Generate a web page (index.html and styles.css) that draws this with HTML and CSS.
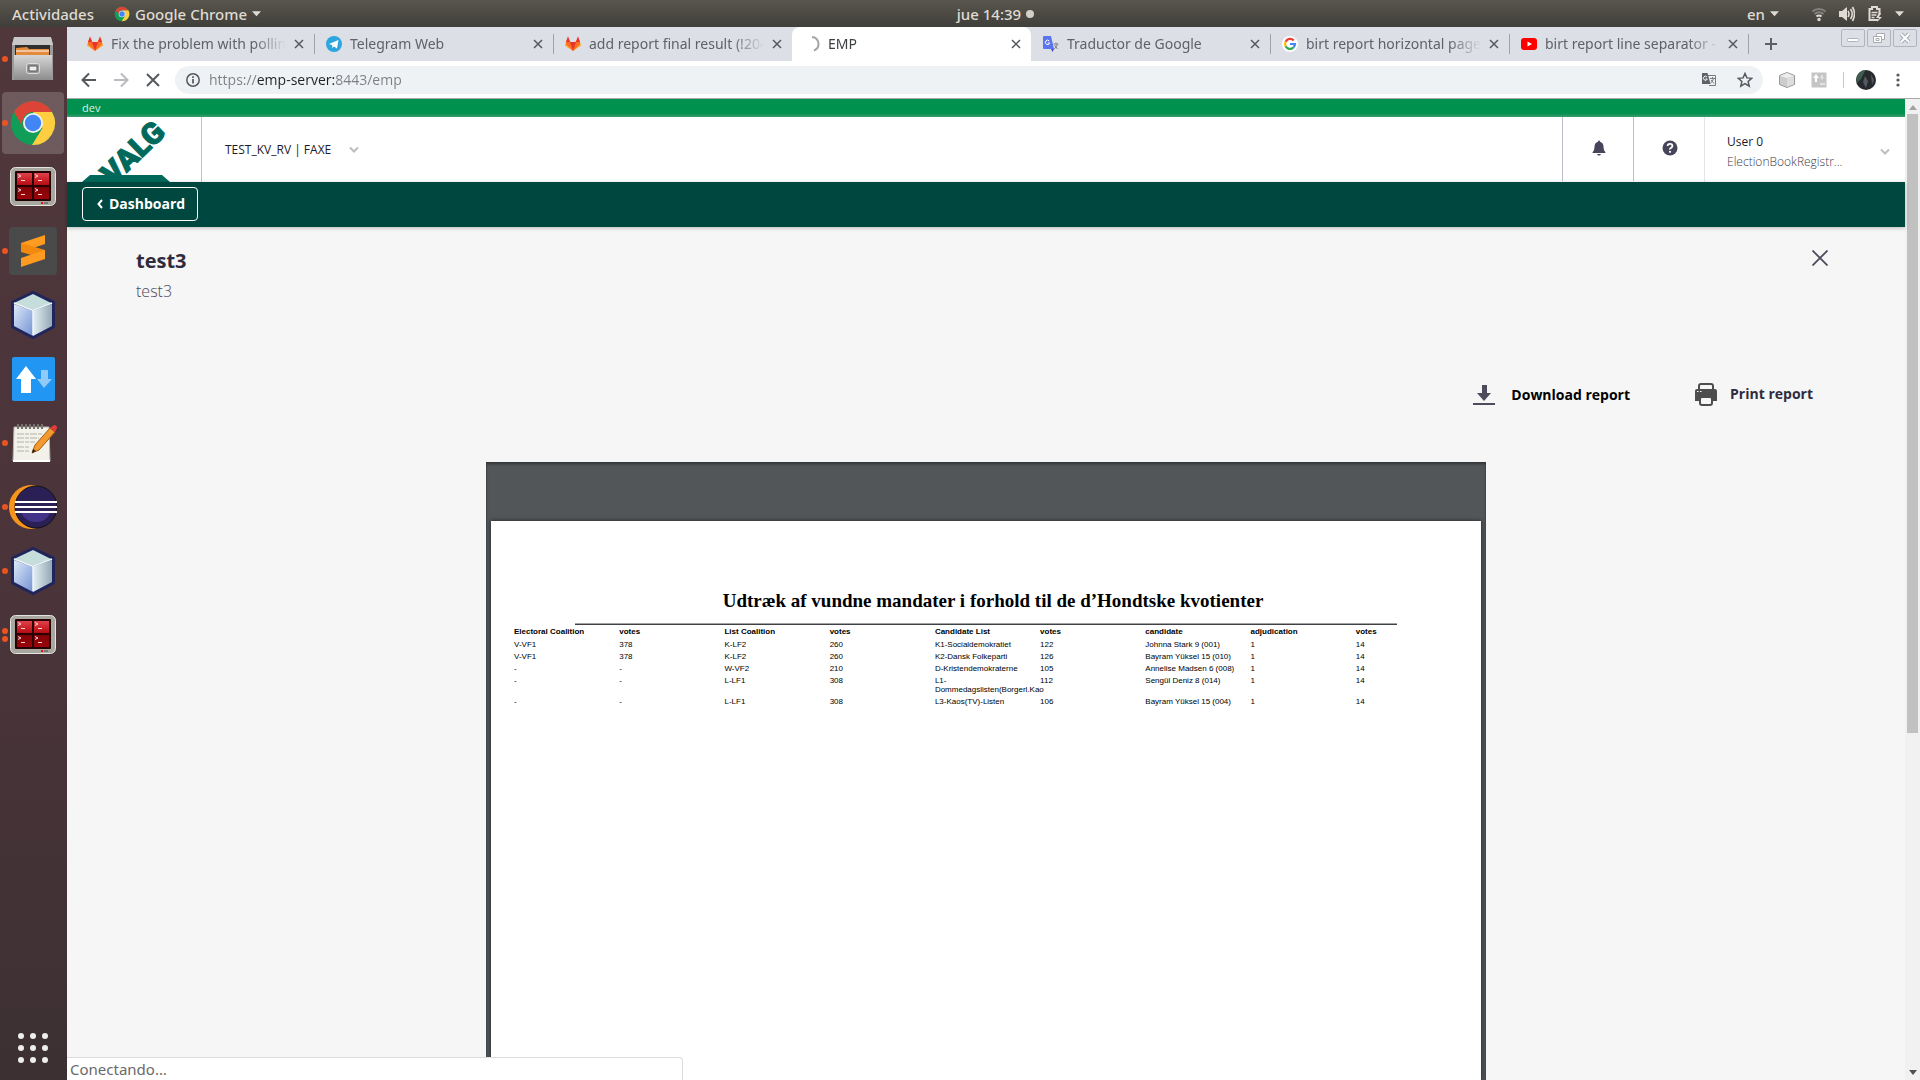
FILE: index.html
```html
<!DOCTYPE html>
<html lang="es">
<head>
<meta charset="utf-8">
<title>EMP</title>
<link rel="stylesheet" href="styles.css">
</head>
<body>
<svg class="defs" aria-hidden="true">
  <defs>
    <linearGradient id="metal" x1="0" y1="0" x2="0" y2="1"><stop offset="0" stop-color="#d6d6d6"/><stop offset="1" stop-color="#8d8d8d"/></linearGradient>
    <linearGradient id="red" x1="0" y1="0" x2="0" y2="1"><stop offset="0" stop-color="#e0414a"/><stop offset=".45" stop-color="#b80c14"/><stop offset=".5" stop-color="#7c0308"/><stop offset="1" stop-color="#9c0309"/></linearGradient>
    <linearGradient id="cubeL" x1="0" y1="0" x2="1" y2="1"><stop offset="0" stop-color="#dfeaf8"/><stop offset="1" stop-color="#7392d4"/></linearGradient>
    <linearGradient id="cubeR" x1="0" y1="0" x2="1" y2="0"><stop offset="0" stop-color="#e6eef3"/><stop offset="1" stop-color="#93a9b6"/></linearGradient>
    <symbol id="chrome" viewBox="0 0 48 48">
      <circle cx="24" cy="24" r="22" fill="#109d58"/>
      <path d="M24 13h19A22 22 0 0 1 23 46l10.500-17z" fill="#ffcd40"/>
      <path d="M5 13A22 22 0 0 1 43 13H24a11 11 0 0 0-9.500 16.500z" fill="#db4437"/>
      <circle cx="24" cy="24" r="10" fill="#f1f1f1"/><circle cx="24" cy="24" r="8.200" fill="#4285f4"/>
    </symbol>
    <symbol id="terminal" viewBox="0 0 48 48">
      <rect x="1.500" y="4.500" width="45" height="38" rx="5" fill="#a8a8a0" stroke="#e4e4df"/>
      <rect x="6" y="8" width="36" height="30" rx="1" fill="#240203"/>
      <path d="M8 10h15v12H8zM25 10h15v12H25zM8 24h15v12H8zM25 24h15v12H25z" fill="url(#red)"/>
      <path d="M9 11.500l3 1.500-3 1.500M12 17.500h4M26 11.500l3 1.500-3 1.500M29 17.500h4M9 25.500l3 1.500-3 1.500M12 31.500h4M26 25.500l3 1.500-3 1.500M29 31.500h4" fill="none" stroke="#fbd5d5"/>
      <path d="M32 40h2" stroke="#e11" stroke-width="2"/><path d="M35 40h4" stroke="#777" stroke-width="2"/>
    </symbol>
    <symbol id="cube" viewBox="0 0 48 48">
      <path d="M24 1L45 11V36L24 47L3 36V11z" fill="#20265c" stroke="#20265c" stroke-width="2" stroke-linejoin="round"/>
      <path d="M24 3L42 12L24 19L5 12z" fill="#c5dedb"/>
      <path d="M5 13L24 20V45L5 35z" fill="url(#cubeL)"/>
      <path d="M43 13L24 20V45L43 35z" fill="url(#cubeR)"/>
      <path d="M5 12L24 19.500L43 12M24 19v25" fill="none" stroke="#eef6fb" stroke-width="1.500"/>
    </symbol>
    <symbol id="gitlab" viewBox="0 0 16 16">
      <path d="M8 15L0 9.500L1 6h14l1 3.500z" fill="#fca326"/>
      <path d="M1 6L3 1l2.500 5L8 15L1 8zM15 6l-2-5l-2.500 5L8 15l7-7z" fill="#fc6d26"/>
      <path d="M5 6h6L8 15zM1 6l2-5.500L5 6zM15 6l-2-5.500L11 6z" fill="#e8352a"/>
    </symbol>
    <symbol id="x" viewBox="0 0 10 10"><path d="M1 1l8 8M9 1l-8 8" stroke="currentColor" stroke-width="1.500" fill="none"/></symbol>
    <symbol id="caret" viewBox="0 0 10 6"><path d="M0 0h10L5 5.500z" fill="currentColor"/></symbol>
    <symbol id="chev" viewBox="0 0 10 8"><path d="M1 1.500l4 4l4-4" fill="none" stroke="#bdbdc1" stroke-width="2"/></symbol>
  </defs>
</svg>

<header class="topbar">
  <div class="topbar-left">
    <button class="top-item">Actividades</button>
    <button class="top-item"><svg width="16" height="16"><use href="#chrome"/></svg><span>Google Chrome</span><svg class="caret" width="9" height="6"><use href="#caret"/></svg></button>
  </div>
  <button class="top-item clock">jue 14:39<span class="notice"></span></button>
  <div class="topbar-right">
    <button class="top-item lang">en<svg class="caret" width="9" height="6"><use href="#caret"/></svg></button>
    <svg width="16" height="16" viewBox="0 0 16 16" fill="none" stroke-width="2"><path d="M1.500 5.500a9.500 9.500 0 0 1 13 0M3.500 8a6.500 6.500 0 0 1 9 0" stroke="#83817b"/><path d="M5.500 10.500a3.500 3.500 0 0 1 5 0" stroke="#dfdbd2"/><circle cx="8" cy="13.500" r="1.700" fill="#dfdbd2"/></svg>
    <svg width="16" height="16" viewBox="0 0 16 16" fill="none" stroke="#dfdbd2" stroke-width="1.600"><path d="M0 5h3l5-4v14l-5-4H0z" fill="#dfdbd2" stroke="none"/><path d="M9 5q2 3 0 6M11.500 3q3.500 5 0 10M13.500 1q4 7 0 14"/></svg>
    <svg width="16" height="16" viewBox="0 0 16 16"><path d="M11 14H2.500V3H5V1h5v2h2.500v6" fill="none" stroke="#dfdbd2" stroke-width="2"/><path d="M4.500 6.500h6M4.500 9h5M4.500 11.500h3" stroke="#dfdbd2" stroke-width="1.500"/><path d="M12 7l-3 5h3l-2 4l5-5h-3l2-4z" fill="#dfdbd2"/></svg>
    <svg class="caret" width="9" height="6"><use href="#caret"/></svg>
  </div>
</header>

<div class="desktop">
  <nav class="dock" aria-label="Dock">
    <button class="app run" aria-label="Files"><svg width="48" height="48" viewBox="0 0 48 48"><path d="M5 3h37l2 6v36H3V9z" fill="#9b9b9b"/><path d="M5 2h37l2 8H3z" fill="#c9c9c9"/><path d="M6 10h35v12H6z" fill="#2f2f2f"/><path d="M7 13l11-1l2 2h20v7H7z" fill="#e58a3c"/><path d="M7 16h33" stroke="#fff" /><path d="M5 20h38v25H5z" fill="url(#metal)"/><rect x="17.500" y="28.500" width="13" height="10" rx="2" fill="#999" stroke="#ddd"/><path d="M20 31h8v5h-8z" fill="#eee" stroke="#555"/></svg></button>
    <button class="app run current" aria-label="Google Chrome"><svg width="48" height="48"><use href="#chrome"/></svg></button>
    <button class="app" aria-label="Terminator"><svg width="48" height="48"><use href="#terminal"/></svg></button>
    <button class="app run" aria-label="Sublime Text"><svg width="48" height="48" viewBox="0 0 48 48"><rect width="48" height="48" rx="4" fill="#4a4a4a"/><path d="M36 8v9L12 25v-9z" fill="#ff9b20"/><path d="M12 16L36 23v9L12 25z" fill="#f38a10"/><path d="M36 23v9L12 40v-9l12-4z" fill="#ff9b20"/></svg></button>
    <button class="app" aria-label="VirtualBox"><svg width="48" height="48"><use href="#cube"/></svg></button>
    <button class="app" aria-label="Transfers"><svg width="48" height="48" viewBox="0 0 48 48"><rect x="3" y="2" width="43" height="44" rx="2" fill="#2196f3"/><path d="M17 11l10 13h-5v14h-10V24H7z" fill="#fff"/><path d="M35 33l-7-9h4V15h7v9h4z" fill="#90caf9"/></svg></button>
    <button class="app run" aria-label="Text editor"><svg width="48" height="48" viewBox="0 0 48 48"><path d="M5 8h35l1 34H4z" fill="#f2f1ea" stroke="#b5b3aa"/><path d="M4 42h37" stroke="#fff" stroke-width="2"/><path d="M8 15h26M8 19h22M8 23h18M8 28h13M8 32h12" stroke="#b2b2a9" stroke-dasharray="7 1 4 1"/><path d="M9 5v5M13 5v5M17 5v5M21 5v5M25 5v5M29 5v5M33 5v5" stroke="#75756e" stroke-width="2"/><path d="M23 34l3-8L41 9l5 4L30 31z" fill="#f29a2e" stroke="#a45b14"/><path d="M41 9l4-3q3 0 3 3l-2 4z" fill="#e33b3b"/><path d="M23 34l1-4l3 2z" fill="#222"/></svg></button>
    <button class="app run" aria-label="Eclipse"><svg width="48" height="48" viewBox="0 0 48 48"><circle cx="22" cy="24" r="22" fill="#f7941e"/><circle cx="27" cy="24" r="21" fill="#2b2056" stroke="#111"/><path d="M12 30h29q-4 9-14 9t-15-9z" fill="#43348a"/><path d="M6 19h42M6 24h42M6 29h42" stroke="#fff" stroke-width="2.200"/></svg></button>
    <button class="app run" aria-label="VirtualBox machine"><svg width="48" height="48"><use href="#cube"/></svg></button>
    <button class="app run two" aria-label="Terminator windows"><svg width="48" height="48"><use href="#terminal"/></svg></button>
    <button class="app all-apps" aria-label="Show applications"><svg width="32" height="32" viewBox="0 0 32 32" fill="#eee"><circle cx="4" cy="4" r="3"/><circle cx="16" cy="4" r="3"/><circle cx="28" cy="4" r="3"/><circle cx="4" cy="16" r="3"/><circle cx="16" cy="16" r="3"/><circle cx="28" cy="16" r="3"/><circle cx="4" cy="28" r="3"/><circle cx="16" cy="28" r="3"/><circle cx="28" cy="28" r="3"/></svg></button>
  </nav>

  <div class="browser">
    <div class="tabstrip">
      <div class="tab"><svg width="16" height="16"><use href="#gitlab"/></svg><span class="tab-title">Fix the problem with polling</span><button class="tab-close" aria-label="Close tab"><svg width="10" height="10"><use href="#x"/></svg></button></div>
      <div class="tab"><svg width="16" height="16" viewBox="0 0 16 16"><circle cx="8" cy="8" r="8" fill="#2ca5e0"/><path d="M3 8l9.500-4L11 12.500L8 10.500L6.500 12L6 9z" fill="#fff"/></svg><span class="tab-title">Telegram Web</span><button class="tab-close" aria-label="Close tab"><svg width="10" height="10"><use href="#x"/></svg></button></div>
      <div class="tab before"><svg width="16" height="16"><use href="#gitlab"/></svg><span class="tab-title">add report final result (!204)</span><button class="tab-close" aria-label="Close tab"><svg width="10" height="10"><use href="#x"/></svg></button></div>
      <div class="tab active"><svg width="16" height="16" viewBox="0 0 16 16"><path d="M8 1a7 7 0 0 1 2 13.500" fill="none" stroke="#a5a5a5" stroke-width="2"/></svg><span class="tab-title">EMP</span><button class="tab-close" aria-label="Close tab"><svg width="10" height="10"><use href="#x"/></svg></button></div>
      <div class="tab"><svg width="16" height="16" viewBox="0 0 16 16"><path d="M7 4h8.500v11.500H9z" fill="#dfe0e3"/><path d="M0 1q0-1 1-1h7l3 13H1q-1 0-1-1z" fill="#5b74f0"/><path d="M8 13h3l-1.500 3z" fill="#3a49c8"/><path d="M6.300 5a2.200 2.200 0 1 0 .4 2H4.700" fill="none" stroke="#fff"/><path d="M10.500 8h5M13 6.500V8M11 13q3-2 3.500-5M11.500 9l3 4" fill="none" stroke="#7b8290"/></svg><span class="tab-title">Traductor de Google</span><button class="tab-close" aria-label="Close tab"><svg width="10" height="10"><use href="#x"/></svg></button></div>
      <div class="tab"><svg width="16" height="16" viewBox="0 0 16 16"><circle cx="8" cy="8" r="8" fill="#fff"/><g fill="none" stroke-width="2.200"><path d="M11.800 4.500A5 5 0 0 0 3.600 5.700" stroke="#ea4335"/><path d="M3.600 5.700a5 5 0 0 0 0 4.600" stroke="#fbbc05"/><path d="M3.600 10.300A5 5 0 0 0 11.300 11.700" stroke="#34a853"/><path d="M11.300 11.700A5 5 0 0 0 13 8H8" stroke="#4285f4"/></g></svg><span class="tab-title">birt report horizontal page break</span><button class="tab-close" aria-label="Close tab"><svg width="10" height="10"><use href="#x"/></svg></button></div>
      <div class="tab"><svg width="16" height="16" viewBox="0 0 16 16"><rect x="0" y="2" width="16" height="12" rx="3" fill="#f00"/><path d="M6.500 5.500v5L11 8z" fill="#fff"/></svg><span class="tab-title">birt report line separator - YouTube</span><button class="tab-close" aria-label="Close tab"><svg width="10" height="10"><use href="#x"/></svg></button></div>
      <button class="new-tab" aria-label="New tab"><svg width="12" height="12" viewBox="0 0 12 12"><path d="M6 0v12M0 6h12" stroke="#5c5f66" stroke-width="2"/></svg></button>
      <div class="window-buttons">
        <button aria-label="Minimize"><svg width="14" height="12" viewBox="0 0 14 12"><rect x="1.500" y="6.500" width="11" height="3" rx="1" fill="#fff" stroke="#b0b2b8"/></svg></button>
        <button aria-label="Restore"><svg width="14" height="12" viewBox="0 0 14 12" fill="#fff" stroke="#a9abb1"><path d="M4.500 1.500h8v6h-8z"/><path d="M1.500 4.500h8v6h-8zM4 6.500h3v2H4z"/></svg></button>
        <button aria-label="Close"><svg width="14" height="12" viewBox="0 0 14 12"><path d="M3 2l8 8M11 2l-8 8" stroke="#a9abb1" stroke-width="4"/><path d="M3 2l8 8M11 2l-8 8" stroke="#fff" stroke-width="2"/></svg></button>
      </div>
    </div>

    <div class="toolbar">
      <div class="nav-buttons">
        <button class="tool" aria-label="Back"><svg width="16" height="16" viewBox="0 0 16 16"><path d="M15 8H2M8 1.500L1.500 8L8 14.500" fill="none" stroke="#55585d" stroke-width="2"/></svg></button>
        <button class="tool" aria-label="Forward"><svg width="16" height="16" viewBox="0 0 16 16"><path d="M1 8h13M8 1.500L14.500 8L8 14.500" fill="none" stroke="#b9bbbe" stroke-width="2"/></svg></button>
        <button class="tool" aria-label="Stop"><svg width="16" height="16" viewBox="0 0 16 16"><path d="M2 2l12 12M14 2L2 14" stroke="#55585d" stroke-width="2"/></svg></button>
      </div>
      <div class="omnibox">
        <svg width="14" height="14" viewBox="0 0 14 14"><circle cx="7" cy="7" r="6.200" fill="none" stroke="#55585d" stroke-width="1.500"/><path d="M7 6v4.500M7 3.300v1.600" stroke="#55585d" stroke-width="1.700"/></svg>
        <input class="url" type="text" aria-label="Address" value="https://emp-server:8443/emp">
        <button class="tool small" aria-label="Translate"><svg width="16" height="16" viewBox="0 0 16 16"><path d="M7 3.500h7.500v10H8" fill="none" stroke="#777a7f"/><path d="M1 1h5.500l3 11H1z" fill="#5f6368"/><path d="M6 5a2 2 0 1 0 .3 2H4.500" fill="none" stroke="#fff"/><path d="M9 6.500h5M11.500 5v1.500M9.500 11q2.500-1.500 3-4.500M10 8l3 3.500" fill="none" stroke="#777a7f"/></svg></button>
        <button class="tool small" aria-label="Bookmark"><svg width="16" height="16" viewBox="0 0 16 16"><path d="M8 1.500l1.900 4.400 4.800.4-3.600 3.200 1.100 4.700L8 11.700l-4.200 2.500 1.100-4.700L1.300 6.300l4.800-.4z" fill="none" stroke="#55585d" stroke-width="1.500"/></svg></button>
      </div>
      <div class="extensions">
        <button class="tool" aria-label="Extension"><svg width="16" height="16" viewBox="0 0 16 16"><path d="M8 .500l7.500 3v9L8 15.500L.500 12.500v-9z" fill="#ccc" stroke="#999"/><path d="M1 4l7 2l7-2L8 1z" fill="#eee"/><path d="M8 6v9l7-3V4z" fill="#ddd"/></svg></button>
        <button class="tool" aria-label="Proxy extension"><svg width="16" height="16" viewBox="0 0 16 16"><rect x=".500" y=".500" width="15" height="15" fill="#c5c5c5"/><path d="M5 2l3 4H6v4H4V6H2z" fill="#fff"/><path d="M11 8L9 5h1V3h2v2h1zM9 11h5v2H9z" fill="#e2e2e2"/></svg></button>
        <span class="divider"></span>
        <button class="tool avatar" aria-label="Profile"><svg width="20" height="20" viewBox="0 0 20 20"><circle cx="10" cy="10" r="10" fill="#27292d"/><path d="M3 3q4-4 6-2L5 9l-4 4q-2-6 2-10z" fill="#3c5c4f"/><path d="M9 6l3 5-2 7-3-6zM15 4l3 6-2 5z" fill="#525a62"/></svg></button>
        <button class="tool" aria-label="Menu"><svg width="4" height="14" viewBox="0 0 4 14" fill="#55585d"><circle cx="2" cy="2" r="1.600"/><circle cx="2" cy="7" r="1.600"/><circle cx="2" cy="12" r="1.600"/></svg></button>
      </div>
    </div>

    <div class="viewport">
      <div class="page">
        <div class="env">dev</div>
        <div class="site-header">
          <a class="logo" href="#" aria-label="Valg">
            <svg width="134" height="65" viewBox="0 0 134 65" fill="#00695b"><text class="logo-text" transform="translate(46 69) rotate(-44)">VALG</text><path d="M15 65L23 58H95L103 65z"/></svg>
          </a>
          <button class="context"><span>TEST_KV_RV | FAXE</span><svg width="10" height="8"><use href="#chev"/></svg></button>
          <button class="icon-cell" aria-label="Notifications"><svg width="14" height="16" viewBox="0 0 14 16" fill="#47455a"><path d="M7 0.500q1 0 1 1.200Q11.500 2.500 11.500 7q0 4 2 5.500v.5H.5v-.5q2-1.500 2-5.500Q2.500 2.500 6 1.700q0-1.200 1-1.200zM5 14h4q-.5 1.500-2 1.500T5 14z"/></svg></button>
          <button class="icon-cell" aria-label="Help"><svg width="16" height="16" viewBox="0 0 16 16"><circle cx="8" cy="8" r="7.500" fill="#47455a"/><path d="M5.600 6q0-2.200 2.400-2.200T10.400 6Q10.400 7.200 9 7.800T8 9.500" fill="none" stroke="#fff" stroke-width="1.800"/><circle cx="8" cy="11.800" r="1.100" fill="#fff"/></svg></button>
          <button class="user"><span class="user-text"><span>User 0</span><span class="role">ElectionBookRegistr...</span></span><svg width="10" height="8"><use href="#chev"/></svg></button>
        </div>
        <nav class="subnav"><button class="dashboard"><svg width="6" height="10" viewBox="0 0 6 10"><path d="M5 1L1.500 5L5 9" fill="none" stroke="#fff" stroke-width="2"/></svg>Dashboard</button></nav>
        <main class="content">
          <div class="heading">
            <div><h1>test3</h1><p>test3</p></div>
            <button class="close" aria-label="Close"><svg width="16" height="16" viewBox="0 0 16 16"><path d="M.500 .500l15 15M15.500 .500l-15 15" stroke="#4d4b5c" stroke-width="1.800"/></svg></button>
          </div>
          <div class="actions">
            <button class="download"><svg width="22" height="22" viewBox="0 0 22 22" fill="#4d4b5c"><path d="M9 1h5v8h4l-7 8-7-8h5zM0 19h22v2H0z"/></svg>Download report</button>
            <button class="print"><svg width="24" height="24" viewBox="0 0 24 24"><rect x="5" y="2" width="14" height="8" rx="2" fill="#f6f6f6" stroke="#4d4d4d" stroke-width="2"/><path d="M3 7h18q2 0 2 2v10H1V9q0-2 2-2z" fill="#4d4d4d"/><rect x="6" y="15" width="12" height="8" rx="2" fill="#f6f6f6" stroke="#4d4d4d" stroke-width="2"/><path d="M3 9.500h1.500M6 9.500h1.500" stroke="#fff"/></svg>Print report</button>
          </div>
          <section class="viewer">
            <article class="sheet">
              <h2>Udtræk af vundne mandater i forhold til de d’Hondtske kvotienter</h2>
              <hr>
              <table>
                <thead><tr><th>Electoral Coalition</th><th>votes</th><th>List Coalition</th><th>votes</th><th>Candidate List</th><th>votes</th><th>candidate</th><th>adjudication</th><th>votes</th></tr></thead>
                <tbody>
                  <tr><td>V-VF1</td><td>378</td><td>K-LF2</td><td>260</td><td>K1-Socialdemokratiet</td><td>122</td><td>Johnna Stark 9 (001)</td><td>1</td><td>14</td></tr>
                  <tr><td>V-VF1</td><td>378</td><td>K-LF2</td><td>260</td><td>K2-Dansk Folkeparti</td><td>126</td><td>Bayram Yüksel 15 (010)</td><td>1</td><td>14</td></tr>
                  <tr><td>-</td><td>-</td><td>W-VF2</td><td>210</td><td>D-Kristendemokraterne</td><td>105</td><td>Annelise Madsen 6 (008)</td><td>1</td><td>14</td></tr>
                  <tr><td>-</td><td>-</td><td>L-LF1</td><td>308</td><td>L1-<br>Dommedagslisten(Borgerl.Kao</td><td>112</td><td>Sengül Deniz 8 (014)</td><td>1</td><td>14</td></tr>
                  <tr><td>-</td><td>-</td><td>L-LF1</td><td>308</td><td>L3-Kaos(TV)-Listen</td><td>106</td><td>Bayram Yüksel 15 (004)</td><td>1</td><td>14</td></tr>
                </tbody>
              </table>
            </article>
          </section>
        </main>
      </div>
      <div class="scrollbar" aria-hidden="true">
        <svg width="8" height="5" viewBox="0 0 8 5"><path d="M4 0l4 5H0z" fill="#a3a3a3"/></svg>
        <div class="track"><div class="thumb"></div></div>
        <svg width="8" height="5" viewBox="0 0 8 5"><path d="M0 0h8L4 5z" fill="#505050"/></svg>
      </div>
      <div class="status">Conectando…</div>
    </div>
  </div>
</div>
</body>
</html>
```

FILE: styles.css
```css
* { box-sizing: border-box; }
body { margin: 0; height: 100vh; display: flex; flex-direction: column; overflow: hidden; font-family: "Noto Sans", "Open Sans", sans-serif; }
button { font: inherit; color: inherit; background: none; border: 0; padding: 0; display: flex; align-items: center; }
svg { display: block; flex: none; }
.defs { position: absolute; width: 0; height: 0; }

/* system bar */
.topbar { height: 27px; flex: none; display: grid; grid-template-columns: 1fr auto 1fr; align-items: center; padding: 0 16px 0 12px; background: linear-gradient(#59564e, #403e39); color: #dfdbd2; font-size: 15px; font-weight: 500; }
.topbar-left, .topbar-right { display: flex; align-items: center; gap: 20px; }
.topbar-right { justify-content: flex-end; gap: 12px; }
.top-item { gap: 5px; line-height: 20px; }
.clock { padding-left: 75px; }
.lang { margin-right: 20px; }
.notice { width: 8px; height: 8px; border-radius: 50%; background: #d2cfc8; }

.desktop { flex: 1; min-height: 0; display: flex; }

/* dock */
.dock { width: 67px; flex: none; display: flex; flex-direction: column; background: linear-gradient(#50373b, #49343a 60%, #3c3032); }
.app { position: relative; height: 64px; justify-content: center; padding: 0 1px 1px 0; }
.app.current::after { content: ""; position: absolute; inset: 1px 3px 1px 2px; border-radius: 4px; background: rgba(255, 255, 255, .18); }
.app.current svg { position: relative; z-index: 1; }
.app.run::before { content: ""; position: absolute; z-index: 1; left: 2px; top: 29px; width: 6px; height: 6px; border-radius: 50%; background: #e95420; }
.app.two::before { top: 25px; box-shadow: 0 8px #e95420; }
.all-apps { margin-top: auto; }

/* tabs */
.browser { flex: 1; min-width: 0; display: flex; flex-direction: column; }
.tabstrip { height: 34px; flex: none; display: flex; padding: 0 3px 0 8px; background: #dcdfe6; color: #5f6269; font-size: 14px; }
.tab { flex: 0 1 239px; min-width: 0; position: relative; display: flex; align-items: center; gap: 8px; padding: 0 10px 0 12px; }
.tab::after { content: ""; position: absolute; right: -1px; top: 7px; width: 1px; height: 20px; background: #9fa2a8; }
.tab.before::after, .tab.active::after { display: none; }
.tab.active { background: #fff; border-radius: 8px 8px 0 0; color: #3c4043; }
.tab-title { flex: 1; min-width: 0; overflow: hidden; white-space: nowrap; line-height: 20px; -webkit-mask-image: linear-gradient(90deg, #000 calc(100% - 32px), transparent); mask-image: linear-gradient(90deg, #000 calc(100% - 32px), transparent); }
.tab-close { color: #55585d; }
.new-tab { padding: 0 17px; }
.window-buttons { margin-left: auto; display: flex; gap: 2px; padding-top: 2px; }
.window-buttons button { width: 24px; height: 18px; justify-content: center; border: 1px solid #b2b4bb; border-radius: 2px; }

/* toolbar */
.toolbar { height: 38px; flex: none; display: flex; align-items: center; gap: 14px; padding: 0 20px 0 14px; background: #fff; border-bottom: 1px solid #a9a9a9; }
.nav-buttons { display: flex; gap: 16px; }
.tool { flex: none; justify-content: center; }
.omnibox { flex: 1; min-width: 0; height: 28px; display: flex; align-items: center; padding: 0 10px 0 11px; background: #eef2f4; border-radius: 14px; }
.url { flex: 1; min-width: 0; height: 24px; border: 0; padding: 0; margin-left: 9px; font: 14px "Open Sans", sans-serif; color: #7b7e83; -webkit-text-fill-color: transparent; background: linear-gradient(90deg, #7b7e83 48px, #202124 48px 127px, #7b7e83 127px); -webkit-background-clip: text; background-clip: text; outline: 0; }
.small { margin-left: 20px; }
.extensions { display: flex; align-items: center; gap: 16px; padding-left: 2px; }
.extensions .divider { width: 1px; height: 16px; background: #c8c9cc; }
.extensions .avatar { margin: 0 4px 0 -4px; }

/* web page */
.viewport { flex: 1; min-height: 0; position: relative; display: flex; }
.page { flex: 1; min-width: 0; display: flex; flex-direction: column; background: #f6f6f6; font-family: "Open Sans", "Noto Sans", sans-serif; color: #1d1b2b; }
.env { height: 18px; flex: none; padding-left: 15px; background: linear-gradient(#00914f 80%, #3d9a6e); color: #d9f0e4; font-size: 11px; line-height: 18px; }
.site-header { height: 65px; flex: none; display: flex; background: #fff; font-size: 12px; }
.logo { width: 135px; flex: none; border-right: 1px solid #c4c3cc; overflow: hidden; }
.logo-text { font: 900 30px Roboto, sans-serif; stroke: #00695b; stroke-width: 1px; }
.context { flex: 1; gap: 18px; padding: 0 23px; }
.icon-cell { width: 71px; height: 64px; flex: none; justify-content: center; padding: 0 0 3px 1px; border-left: 1px solid #bdbccb; }
.user { width: 201px; flex: none; justify-content: space-between; padding: 4px 15px 0 22px; border-left: 1px solid #e5e5e9; text-align: left; }
.user-text { display: flex; flex-direction: column; line-height: 20px; }
.role { color: #3d3c48; font-weight: 300; }
.subnav { flex: none; padding: 5px 15px 6px; background: #00483f; box-shadow: 0 1px 4px rgba(0, 0, 0, .25); z-index: 1; }
.dashboard { height: 34px; padding: 0 12px 1px 14px; gap: 6px; border: 1px solid #fff; border-radius: 4px; color: #fff; font-size: 14px; font-weight: 700; }
.content { flex: 1; min-height: 0; display: flex; flex-direction: column; }
.heading { display: flex; justify-content: space-between; align-items: flex-start; padding: 20px 77px 0 69px; }
h1 { margin: 0; font-size: 20px; line-height: 28px; color: #2f2c3d; }
.heading p { margin: 4px 0 0; font-size: 16px; font-weight: 300; line-height: 24px; color: #4d4b5c; }
.close { padding-top: 3px; }
.actions { display: flex; justify-content: flex-end; align-items: flex-start; gap: 64px; padding: 79px 92px 55px 0; font-size: 14px; font-weight: 700; line-height: 24px; }
.download { gap: 16px; color: #000; padding-top: 1px; }
.print { gap: 12px; color: #2f2c3d; }

/* document viewer */
.viewer { flex: 1; min-height: 0; width: 1000px; max-width: 100%; align-self: center; display: flex; overflow: hidden; padding: 59px 5px 0; background: #525659; box-shadow: inset 0 2px 3px rgba(0, 0, 0, .4); }
.sheet { flex: 1; min-width: 0; padding: 68px 20px 0 23px; background: #fff; color: #000; box-shadow: 0 0 4px rgba(0, 0, 0, .6); }
h2 { margin: 0 0 0 11px; text-align: center; font: bold 19px/24px "Liberation Serif", serif; }
hr { margin: 10px 64px 1px 61px; border: 0; height: 2px; background: linear-gradient(#a2a3a6 50%, #3f4145 50%); }
table { width: 100%; table-layout: fixed; border-collapse: collapse; font: 8px/9px "Liberation Sans", sans-serif; }
th, td { padding: 1px 0 2px; text-align: left; vertical-align: top; white-space: nowrap; }
th { padding-bottom: 3px; }

.scrollbar { width: 15px; flex: none; display: flex; flex-direction: column; align-items: center; padding: 6px 0 5px; background: #f1f1f1; }
.track { flex: 1; align-self: stretch; margin: 4px 2px; }
.thumb { height: 65%; background: #c1c1c1; }
.status { position: absolute; left: 0; bottom: 0; width: 616px; height: 23px; padding-left: 3px; background: #fff; border: 1px solid #dcdcdc; border-width: 1px 1px 0 0; border-radius: 0 4px 0 0; color: #6a6a6a; font-size: 15px; line-height: 22px; }
```
